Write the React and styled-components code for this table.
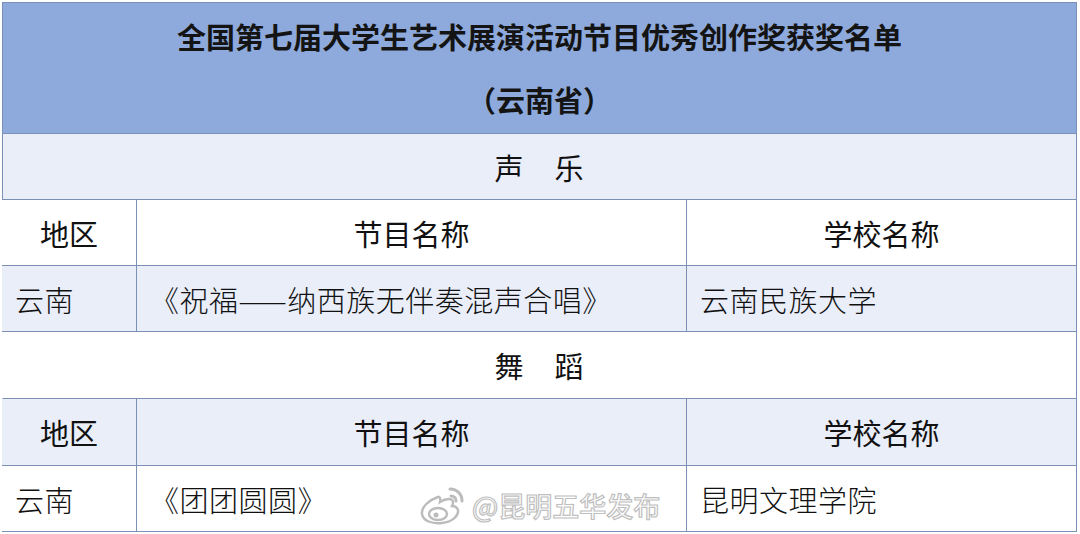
import styled, { createGlobalStyle } from 'styled-components';

const GlobalStyle = createGlobalStyle`
  html, body {
    margin: 0;
    padding: 0;
    background: #ffffff;
  }
  body {
    font-family: 'Noto Sans CJK SC', 'Noto Sans', sans-serif;
    color: #111;
  }
`;

const Page = styled.div`
  width: 1080px;
  height: 534px;
  padding: 2px 3px 0 2px;
  box-sizing: border-box;
  position: relative;
  overflow: hidden;
`;

const TitleBlock = styled.div`
  height: 132px;
  box-sizing: border-box;
  background: #8eaadc;
  border: 1px solid #7b90b4;
  display: flex;
  flex-direction: column;
  align-items: center;
  padding-top: 2px;
  font-size: 29px;
  font-weight: 700;
  line-height: 63px;
  color: #141414;
`;

const SectionRow = styled.div`
  height: ${(p) => p.$h || 66}px;
  box-sizing: border-box;
  background: ${(p) => (p.$shade ? '#e9eef9' : '#ffffff')};
  border-left: 1px solid ${(p) => (p.$shade ? '#7b90b4' : 'transparent')};
  border-right: 1px solid #7b90b4;
  border-bottom: 1px solid #7b90b4;
  display: flex;
  align-items: center;
  justify-content: center;
  font-size: 29px;
  letter-spacing: 1px;
`;

const Row = styled.div`
  display: grid;
  grid-template-columns: 134px 550px 1fr;
  height: ${(p) => p.$h || 66}px;
  box-sizing: border-box;
  background: ${(p) => (p.$shade ? '#e9eef9' : '#ffffff')};
  border-bottom: 1px solid #7b90b4;
`;

const Cell = styled.div`
  display: flex;
  align-items: center;
  justify-content: ${(p) => (p.$head ? 'center' : 'flex-start')};
  padding: 0 13px;
  font-size: 29px;
  font-weight: ${(p) => (p.$head ? 400 : 300)};
  letter-spacing: ${(p) => (p.$head ? 0 : 0.5)}px;
  color: #111;
  & + & {
    border-left: 1px solid #7b90b4;
  }
  &:last-child {
    border-right: 1px solid #7b90b4;
  }
`;

const Watermark = styled.div`
  position: absolute;
  left: 418px;
  top: 485px;
  display: flex;
  align-items: center;
  gap: 4px;
  font-size: 27px;
  font-weight: 500;
  color: #ffffff;
  -webkit-text-stroke: 1.2px #b9b9b9;
  opacity: 0.9;
`;

function WeiboLogo() {
  return (
    <svg width="50" height="40" viewBox="0 0 50 40">
      <g fill="#ffffff" stroke="#b5b5b5" strokeWidth="2.4">
        <path d="M20 12c-9 3-17 10-16 17 1 7 10 10 20 9 10-1 17-7 16-13-1-3-4-4-6-4 2-4 1-7-3-7-3 0-6 1-9 3 1-4-1-6-2-5z" />
        <ellipse cx="20" cy="29" rx="9" ry="6" />
      </g>
      <circle cx="18" cy="30" r="2.5" fill="#b5b5b5" />
      <g fill="none" stroke="#b5b5b5" strokeWidth="3" strokeLinecap="round">
        <path d="M33 11c3 0 5 2 5 5" />
        <path d="M32 4c7 0 12 5 12 12" />
      </g>
    </svg>
  );
}

function App() {
  return (
    <>
      <GlobalStyle />
      <Page>
        <TitleBlock>
          <div>全国第七届大学生艺术展演活动节目优秀创作奖获奖名单</div>
          <div>（云南省）</div>
        </TitleBlock>

        <SectionRow $shade>声　乐</SectionRow>
        <Row>
          <Cell $head>地区</Cell>
          <Cell $head>节目名称</Cell>
          <Cell $head>学校名称</Cell>
        </Row>
        <Row $shade>
          <Cell>云南</Cell>
          <Cell>《祝福——纳西族无伴奏混声合唱》</Cell>
          <Cell>云南民族大学</Cell>
        </Row>

        <SectionRow $h={67}>舞　蹈</SectionRow>
        <Row $shade $h={67}>
          <Cell $head>地区</Cell>
          <Cell $head>节目名称</Cell>
          <Cell $head>学校名称</Cell>
        </Row>
        <Row>
          <Cell>云南</Cell>
          <Cell>《团团圆圆》</Cell>
          <Cell>昆明文理学院</Cell>
        </Row>

        <Watermark>
          <WeiboLogo />
          <span>@昆明五华发布</span>
        </Watermark>
      </Page>
    </>
  );
}

export default App;
